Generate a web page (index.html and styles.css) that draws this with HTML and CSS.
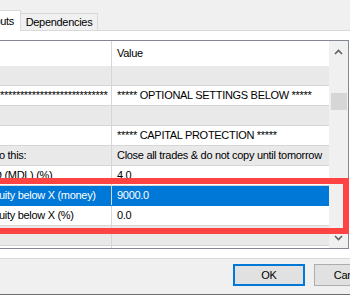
FILE: index.html
```html
<!DOCTYPE html>
<html lang="en">
<head>
  <meta charset="UTF-8">
  <title>Expert properties</title>
  <link rel="stylesheet" href="styles.css">
</head>
<body>
  <div class="dialog">
    <div class="tabs">
      <div class="tab active">Inputs</div>
      <div class="tab">Dependencies</div>
    </div>

    <div class="panel">
      <div class="grid">
        <div class="table">
          <div class="row head"><div class="name"></div><div class="value">Value</div></div>
          <div class="row alt"><div class="name"></div><div class="value"></div></div>
          <div class="row"><div class="name stars">****************************</div><div class="value">***** OPTIONAL SETTINGS BELOW *****</div></div>
          <div class="row alt"><div class="name"></div><div class="value"></div></div>
          <div class="row"><div class="name"></div><div class="value">***** CAPITAL PROTECTION *****</div></div>
          <div class="row alt"><div class="name">o this:</div><div class="value">Close all trades &amp; do not copy until tomorrow</div></div>
          <div class="row"><div class="name shift">D (MDL) (%)</div><div class="value">4.0</div></div>
          <div class="row selected"><div class="name">uity below X (money)</div><div class="value">9000.0</div></div>
          <div class="row"><div class="name">uity below X (%)</div><div class="value">0.0</div></div>
          <div class="row alt"><div class="name"></div><div class="value"></div></div>
          <div class="row"><div class="name"></div><div class="value"></div></div>
        </div>

        <div class="vscroll">
          <div class="arrow">
            <svg width="9" height="6" viewBox="0 0 9 6"><polyline points="1,5 4.5,1.5 8,5" fill="none" stroke="#606060" stroke-width="1.6"/></svg>
          </div>
          <div class="track"><div class="thumb"></div></div>
          <div class="arrow">
            <svg width="9" height="6" viewBox="0 0 9 6"><polyline points="1,1 4.5,4.5 8,1" fill="none" stroke="#606060" stroke-width="1.6"/></svg>
          </div>
        </div>
      </div>
    </div>

    <div class="footer">
      <button class="btn default">OK</button>
      <button class="btn">Cancel</button>
    </div>

    <!-- annotation box drawn over the grid -->
    <div class="highlight"></div>
  </div>
</body>
</html>
```

FILE: styles.css
```css
body {
  margin: 0;
  padding: 0;
  background-color: #f0f0f0;
  font-family: "Liberation Sans", Arial, sans-serif;
  font-size: 11px;
  letter-spacing: -0.3px;
  color: #000;
}

.dialog {
  position: relative;
  width: 350px;
  height: 295px;
  overflow: hidden;
  background-color: #f0f0f0;
}

/* tab strip */
.tabs {
  display: flex;
  align-items: flex-end;
  height: 31px;
  margin-left: -21px;
  border-bottom: 1px solid #d9d9d9;
  box-sizing: border-box;
}

.tab {
  height: 17px;
  width: 77px;
  box-sizing: border-box;
  border: 1px solid #d9d9d9;
  border-bottom: none;
  border-left: none;
  background-color: #f0f0f0;
  text-align: center;
  line-height: 17px;
}

.tab.active {
  height: 21px;
  width: 42px;
  margin-bottom: -1px;
  border-left: 1px solid #d9d9d9;
  background-color: #fff;
  line-height: 20px;
}

/* property grid */
.panel {
  background-color: #fff;
  padding: 9px 1px 9px 0;
  border-bottom: 1px solid #d9d9d9;
}

.grid {
  display: flex;
  height: 209px;
  box-sizing: border-box;
  border: 1px solid #828790;
  border-left: none;
}

.table {
  flex: 1;
  overflow: hidden;
}

.row {
  display: flex;
  height: 20px;
  line-height: 19px;
  box-sizing: border-box;
  border-bottom: 1px solid #d6d6d6;
  background-color: #fff;
}

.row.head {
  height: 25px;
  line-height: 25px;
  border-bottom: none;
}

.row.alt {
  background-color: #e9e9e9;
}

.row.selected {
  background-color: #0078d7;
  border-bottom-color: #0078d7;
  color: #fff;
}

.name {
  width: 112px;
  flex-shrink: 0;
  box-sizing: border-box;
  border-right: 1px solid #d6d6d6;
  overflow: hidden;
  white-space: nowrap;
  text-indent: -1px;
}

.name.stars {
  text-indent: -4px;
}

.name.shift {
  text-indent: -6px;
}

.value {
  flex: 1;
  padding-left: 5px;
  overflow: hidden;
  white-space: nowrap;
}

/* vertical scrollbar */
.vscroll {
  width: 19px;
  display: flex;
  flex-direction: column;
  background-color: #f0f0f0;
}

.arrow {
  height: 21px;
  display: flex;
  align-items: center;
  justify-content: center;
}

.track {
  flex: 1;
}

.thumb {
  height: 17px;
  margin: 31px 1px 0 2px;
  background-color: #d6d6d6;
}

/* buttons */
.footer {
  display: flex;
  height: 36px;
  box-sizing: border-box;
  padding: 5px 0 0 233px;
  border-bottom: 1px solid #6d6d6d;
}

.btn {
  flex-shrink: 0;
  width: 72px;
  height: 22px;
  margin-right: 9px;
  padding: 0;
  font-family: "Liberation Sans", Arial, sans-serif;
  font-size: 11px;
  letter-spacing: -0.3px;
  color: #000;
  background-color: #e1e1e1;
  border: 1px solid #adadad;
}

.btn.default {
  border: 2px solid #0078d7;
}

.highlight {
  position: absolute;
  left: -10px;
  top: 178px;
  width: 359px;
  height: 56px;
  box-sizing: border-box;
  border: 6px solid #fe4343;
}
```
